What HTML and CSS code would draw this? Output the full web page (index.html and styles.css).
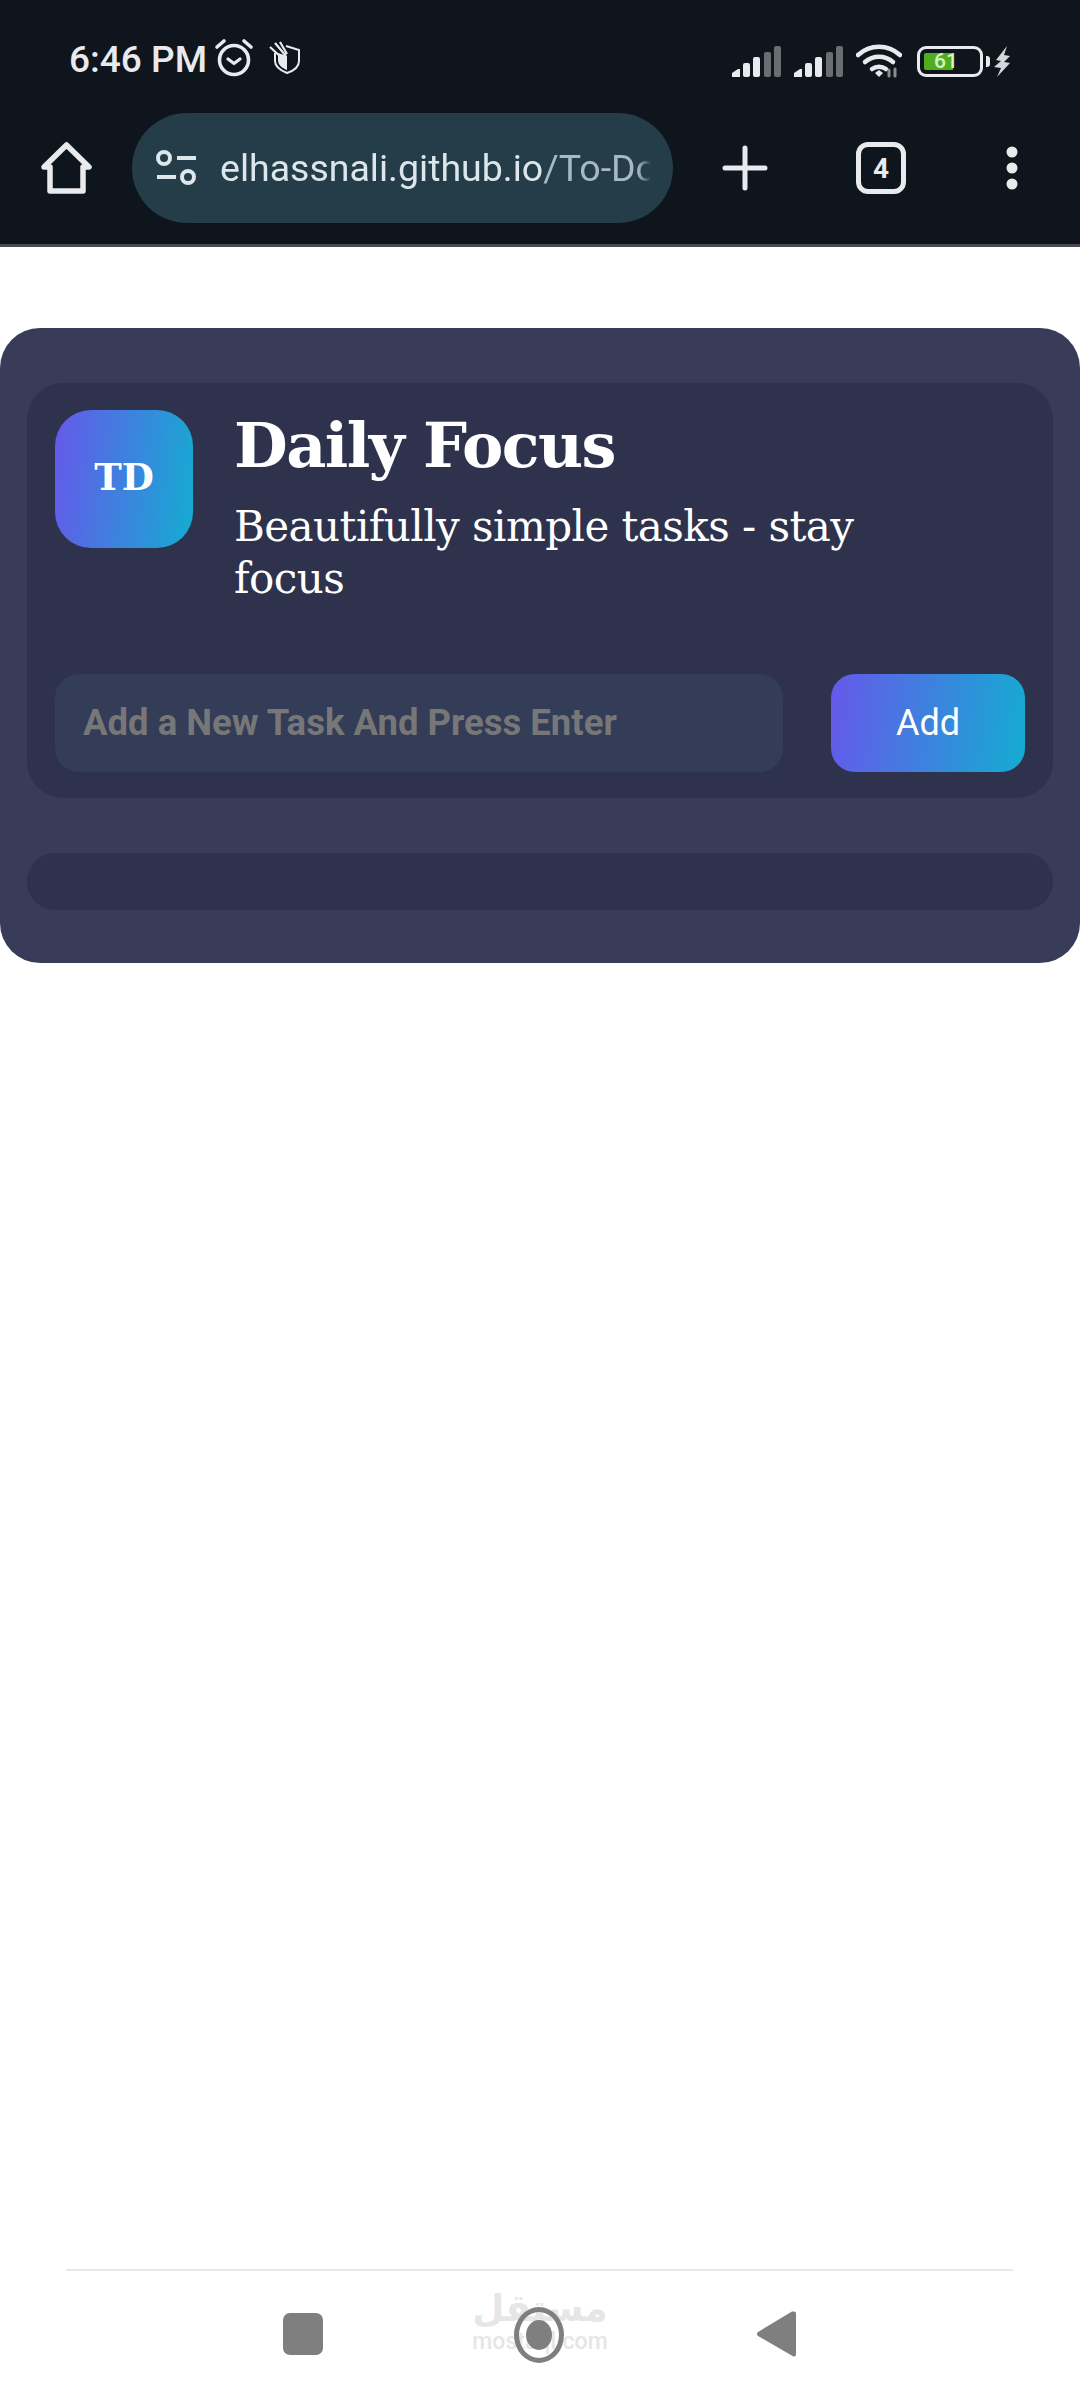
FILE: index.html
```html
<!DOCTYPE html>
<html lang="en">
<head>
  <meta charset="UTF-8">
  <meta name="viewport" content="width=device-width, initial-scale=1.0">
  <title>Daily Focus</title>
  <link rel="stylesheet" href="styles.css">
</head>
<body>
  <header class="chrome">
    <div class="status-bar">
      <span class="time">6:46 PM</span>
      <svg class="alarm" viewBox="0 0 40 40" fill="none" stroke="#e8eaed">
        <circle cx="20" cy="22" r="14.5" stroke-width="3.6"/>
        <path d="M14 21l6 4.500 6-4.500" stroke-width="3.2" stroke-linecap="round" stroke-linejoin="round"/>
        <path d="M3 9l7-6M37 9l-7-6" stroke-width="3.6" stroke-linecap="round"/>
      </svg>
      <svg class="shield" viewBox="0 0 32 34" fill="none">
        <path d="M17 5l13 4v11c0 6-6 10-12 12C13 30 6 26 6 20V12" stroke="#e8eaed" stroke-width="2"/>
        <path d="M9 12l9 3v14c-5-2-9-5-9-10z" fill="#e8eaed"/>
        <path d="M1 6l12 11M6 2l11 13M11 1l7 12" stroke="#e8eaed" stroke-width="2.2"/>
      </svg>
      <div class="status-right">
        <svg class="signal" viewBox="0 0 49 31">
          <path d="M0 31v-4l6-4h2v8z" fill="#e8eaed"/>
          <rect x="11" y="17" width="7" height="14" rx="2" fill="#e8eaed"/>
          <rect x="21" y="11" width="7" height="20" rx="2" fill="#e8eaed"/>
          <rect x="32" y="6" width="7" height="25" rx="2" fill="#6a6e72"/>
          <rect x="42" y="0" width="7" height="31" rx="2" fill="#6a6e72"/>
        </svg>
        <svg class="signal" viewBox="0 0 49 31">
          <path d="M0 31v-4l6-4h2v8z" fill="#e8eaed"/>
          <rect x="11" y="17" width="7" height="14" rx="2" fill="#e8eaed"/>
          <rect x="21" y="11" width="7" height="20" rx="2" fill="#e8eaed"/>
          <rect x="32" y="6" width="7" height="25" rx="2" fill="#6a6e72"/>
          <rect x="42" y="0" width="7" height="31" rx="2" fill="#6a6e72"/>
        </svg>
        <svg class="wifi" viewBox="0 0 46 34" fill="none" stroke="#e8eaed" stroke-width="4.5" stroke-linecap="round">
          <path d="M2 11C14 0 32 0 44 11"/>
          <path d="M9 18c8-7 20-7 28 0"/>
          <path d="M16 25c4-3 10-3 14 0"/>
          <path d="M19 29l4-3 4 3-4 4z" fill="#e8eaed" stroke="none"/>
          <path d="M33 32v-6M39 32v-7" stroke="#8a8d90" stroke-width="3"/>
        </svg>
        <div class="battery">
          <div class="battery-fill"></div>
          <span class="battery-level">61</span>
        </div>
        <span class="battery-nub"></span>
        <svg class="bolt" viewBox="0 0 17 31">
          <path d="M13 0L2 14l5 1-7 6 7 1-4 9 13-14-6-1 6-6-6-1z" fill="#d5d7da"/>
        </svg>
      </div>
    </div>
    <div class="toolbar">
      <svg class="home-icon" viewBox="0 0 51 52" fill="none" stroke="#e8eaed" stroke-width="5.500" stroke-linejoin="round">
        <path d="M3 25L25.500 3 48 25h-6v24H9V25z"/>
      </svg>
      <div class="url-bar">
        <svg class="tune-icon" viewBox="0 0 42 36" fill="none" stroke="#dce6eb" stroke-width="4">
          <circle cx="9" cy="8" r="6"/>
          <path d="M22 8h19M2 27h19"/>
          <circle cx="33" cy="27" r="6"/>
        </svg>
        <div class="url-text"><span class="host">elhassnali.github.io</span><span class="path">/To-Do</span></div>
      </div>
      <svg class="plus-icon" viewBox="0 0 46 46" stroke="#e8eaed" stroke-width="5" stroke-linecap="round">
        <path d="M23 3v40M3 23h40"/>
      </svg>
      <div class="tabs-count">4</div>
      <svg class="dots-icon" viewBox="0 0 12 44" fill="#e8eaed">
        <circle cx="6" cy="6" r="5.500"/>
        <circle cx="6" cy="22" r="5.500"/>
        <circle cx="6" cy="38" r="5.500"/>
      </svg>
    </div>
  </header>

  <main class="page">
    <section class="app-card">
      <div class="panel">
        <div class="brand">
          <div class="logo">TD</div>
          <div class="brand-text">
            <h1>Daily Focus</h1>
            <p>Beautifully simple tasks - stay focus</p>
          </div>
        </div>
        <form class="task-form">
          <input class="task-input" type="text" placeholder="Add a New Task And Press Enter">
          <button class="add-btn" type="button">Add</button>
        </form>
      </div>
      <div class="task-list"></div>
    </section>
  </main>

  <footer class="nav-bar">
    <span class="nav-square"></span>
    <div class="nav-home"><span class="nav-dot"></span></div>
    <svg class="nav-back" viewBox="0 0 39 48">
      <path d="M37 1.500a2 2 0 0 1 2 2v41a2 2 0 0 1-3 1.700L1 26a2.500 2.500 0 0 1 0-4L35 1.500z" fill="#7f7f7f"/>
    </svg>
    <div class="watermark">
      <span class="watermark-ar">مستقل</span>
      <span class="watermark-en">mostaql.com</span>
    </div>
  </footer>
</body>
</html>
```

FILE: styles.css
```css
*{
  margin: 0;
  padding: 0;
  box-sizing: border-box;
}
body{
  font-family: Roboto, Arial, sans-serif;
  width: 1080px;
  height: 2400px;
  display: flex;
  flex-direction: column;
  background-color: white;
  overflow: hidden;
}

/* browser top */
.chrome{
  background-color: #0f151c;
  border-bottom: 3px solid #484c52;
  height: 247px;
}
.status-bar{
  height: 113px;
  padding: 38px 69px 0 69px;
  display: flex;
  align-items: flex-start;
}
.time{
  color: #e8eaed;
  font-size: 37px;
  font-weight: 500;
  line-height: 44px;
}
.alarm{
  width: 40px;
  height: 40px;
  margin-left: 7px;
}
.shield{
  width: 32px;
  height: 34px;
  margin: 3px 0 0 15px;
}
.status-right{
  display: flex;
  align-items: center;
  margin-left: auto;
  padding-top: 6px;
}
.signal{
  width: 49px;
  height: 31px;
  margin-right: 13px;
}
.wifi{
  width: 46px;
  height: 34px;
  margin-right: 15px;
}
.battery{
  width: 66px;
  height: 31px;
  border: 3.5px solid #e8eaed;
  border-radius: 9px;
  position: relative;
  padding: 4px;
}
.battery-fill{
  width: 29px;
  height: 100%;
  background-color: #4fae1f;
  border-radius: 2px 0 0 2px;
}
.battery-level{
  position: absolute;
  left: 14px;
  top: -2px;
  color: #d8f3c8;
  font-size: 21px;
  font-weight: 500;
  line-height: 28px;
}
.battery-nub{
  width: 4px;
  height: 11px;
  background-color: #e8eaed;
  border-radius: 0 3px 3px 0;
  margin: 0 4px 0 3px;
}
.bolt{
  width: 17px;
  height: 31px;
}
.toolbar{
  display: flex;
  align-items: flex-start;
}
.home-icon{
  width: 51px;
  height: 52px;
  margin: 29px 0 0 41px;
}
.url-bar{
  width: 541px;
  height: 110px;
  margin-left: 40px;
  background-color: #253c49;
  border-radius: 55px;
  display: flex;
  align-items: center;
  padding-left: 23px;
}
.tune-icon{
  width: 42px;
  height: 36px;
  flex-shrink: 0;
}
.url-text{
  width: 431px;
  margin-left: 23px;
  overflow: hidden;
  white-space: nowrap;
  font-size: 37.5px;
  -webkit-mask-image: linear-gradient(to right, black 97%, transparent);
  mask-image: linear-gradient(to right, black 97%, transparent);
}
.host{
  color: #dce6eb;
}
.path{
  color: #a7bac4;
}
.plus-icon{
  width: 46px;
  height: 46px;
  margin: 32px 0 0 49px;
}
.tabs-count{
  width: 50px;
  height: 52px;
  margin: 29px 0 0 88px;
  border: 5px solid #e8eaed;
  border-radius: 12px;
  color: #e8eaed;
  font-size: 28px;
  font-weight: 700;
  display: flex;
  justify-content: center;
  align-items: center;
}
.dots-icon{
  width: 12px;
  height: 44px;
  margin: 33px 0 0 100px;
}

/* app */
.page{
  padding-top: 81px;
}
.app-card{
  background-color: #383c58;
  border-radius: 40px;
  height: 635px;
  padding: 55px 27px;
}
.panel{
  background-color: #2e324d;
  border-radius: 36px;
  height: 415px;
  padding: 27px 28px;
}
.brand{
  display: flex;
  height: 264px;
}
.logo{
  width: 138px;
  height: 138px;
  flex-shrink: 0;
  border-radius: 36px;
  background: linear-gradient(97deg, #6658ea, #14acd2);
  color: white;
  font-family: "DejaVu Serif", serif;
  font-weight: 700;
  font-size: 37px;
  padding-bottom: 5px;
  display: flex;
  justify-content: center;
  align-items: center;
}
.brand-text{
  margin-left: 41px;
  color: white;
  font-family: "DejaVu Serif", serif;
}
.brand-text h1{
  font-size: 62px;
  font-weight: 700;
  line-height: 72px;
  letter-spacing: -1.6px;
  margin-bottom: 19px;
}
.brand-text p{
  font-size: 42px;
  line-height: 52px;
  letter-spacing: -0.55px;
  width: 660px;
}
.task-form{
  display: flex;
  justify-content: space-between;
}
.task-input{
  width: 728px;
  height: 98px;
  background-color: #333d58;
  border: none;
  border-radius: 24px;
  padding: 0 0 2px 28px;
  font-family: Roboto, Arial, sans-serif;
  font-size: 36.5px;
  font-weight: 700;
  outline: none;
}
.task-input::placeholder{
  color: #777;
  opacity: 1;
}
.add-btn{
  width: 194px;
  height: 98px;
  border: none;
  border-radius: 24px;
  background: linear-gradient(97deg, #6658ea, #14acd2);
  color: white;
  font-family: Roboto, Arial, sans-serif;
  font-size: 36px;
}
.task-list{
  height: 57px;
  margin-top: 55px;
  background-color: #2e324d;
  border-radius: 28px;
}

/* phone nav */
.nav-bar{
  margin: auto 67px 0 66px;
  height: 131px;
  border-top: 2px solid #e8e8e8;
  display: flex;
  align-items: flex-start;
  padding: 36px 0 0 217px;
  position: relative;
}
.nav-square{
  width: 40px;
  height: 42px;
  margin-top: 6px;
  background-color: #7f7f7f;
  border-radius: 7px;
}
.nav-home{
  width: 50px;
  height: 56px;
  margin-left: 191px;
  border: 5px solid #7f7f7f;
  border-radius: 50%;
  display: flex;
  justify-content: center;
  align-items: center;
  z-index: 1;
}
.nav-dot{
  width: 26px;
  height: 30px;
  background-color: #7f7f7f;
  border-radius: 50%;
}
.nav-back{
  width: 39px;
  height: 48px;
  margin: 3px 0 0 193px;
}
.watermark{
  position: absolute;
  left: 408px;
  top: 16px;
  width: 132px;
  display: flex;
  flex-direction: column;
  align-items: center;
  color: #e6e6e6;
}
.watermark-ar{
  font-family: "DejaVu Sans", sans-serif;
  font-weight: 700;
  font-size: 37px;
  line-height: 44px;
}
.watermark-en{
  font-size: 23px;
  line-height: 22px;
  font-weight: 500;
}
```
